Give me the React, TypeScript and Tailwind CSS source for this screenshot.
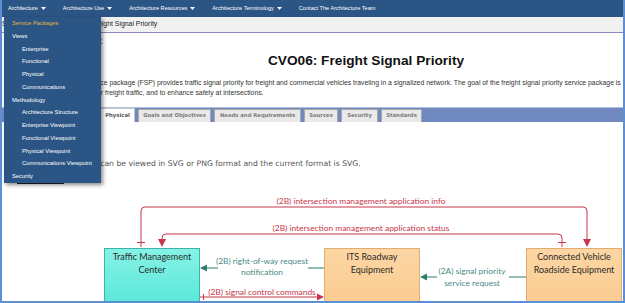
import React from "react";

const navItems = [
    { label: "Architecture", caret: true },
    { label: "Architecture Use", caret: true },
    { label: "Architecture Resources", caret: true },
    { label: "Architecture Terminology", caret: true },
    { label: "Contact The Architecture Team", caret: false },
];

const menuItems = [
    { label: "Service Packages", level: 0, active: true },
    { label: "Views", level: 0 },
    { label: "Enterprise", level: 1 },
    { label: "Functional", level: 1 },
    { label: "Physical", level: 1 },
    { label: "Communications", level: 1 },
    { label: "Methodology", level: 0 },
    { label: "Architecture Structure", level: 1 },
    { label: "Enterprise Viewpoint", level: 1 },
    { label: "Functional Viewpoint", level: 1 },
    { label: "Physical Viewpoint", level: 1 },
    { label: "Communications Viewpoint", level: 1 },
    { label: "Security", level: 0 },
];

const tabs = [
    { label: "Physical", w: "w-[35px]", active: true },
    { label: "Goals and Objectives", w: "w-[73px]" },
    { label: "Needs and Requirements", w: "w-[87px]" },
    { label: "Sources", w: "w-[34px]" },
    { label: "Security", w: "w-[37px]" },
    { label: "Standards", w: "w-[41px]" },
];

function Caret() {
    return (
        <svg width="5" height="3" viewBox="0 0 5 3" className="ml-[3px]">
            <path d="M0 0H5L2.5 3Z" fill="white" />
        </svg>
    );
}

const RED = "#c7364b";
const TEAL = "#2f7d6d";
const FONT = "Lato, 'Open Sans', sans-serif";

function Diagram() {
    return (
        <svg width={621} height={108} viewBox="2 195 621 108" className="block mt-[9px]">
            <defs>
                <linearGradient id="tmc" x1="0" y1="0" x2="0" y2="1">
                    <stop offset="0" stopColor="#86f2e6" />
                    <stop offset="1" stopColor="#4ee6d6" />
                </linearGradient>
                <linearGradient id="rse" x1="0" y1="0" x2="0" y2="1">
                    <stop offset="0" stopColor="#fdd6a4" />
                    <stop offset="1" stopColor="#f9c98c" />
                </linearGradient>
            </defs>

            {/* flow 1: info, TMC -> CV roadside */}
            <path d="M141 248V212Q141 208 145 208H583Q587 208 587 212V241" fill="none" stroke={RED} strokeWidth="1" />
            <path d="M583 240H591L587 248Z" fill={RED} />
            <path d="M137 243.5H145" stroke={RED} strokeWidth="1" />
            <text x="361" y="205" textAnchor="middle" fontFamily={FONT} fontSize="8.4" fill={RED}>
                (2B) intersection management application info
            </text>

            {/* flow 2: status, CV roadside -> TMC */}
            <path d="M562 248V239Q562 235 558 235H166Q162 235 162 239V241" fill="none" stroke={RED} strokeWidth="1" />
            <path d="M158 240H166L162 248Z" fill={RED} />
            <path d="M558 243.5H566" stroke={RED} strokeWidth="1" />
            <text x="361" y="232" textAnchor="middle" fontFamily={FONT} fontSize="8.4" fill={RED}>
                (2B) intersection management application status
            </text>

            {/* boxes */}
            <rect x="104.5" y="249.5" width="95" height="70" fill="url(#tmc)" stroke="#3fb3a6" />
            <rect x="324.5" y="249.5" width="95" height="70" fill="url(#rse)" stroke="#e2ad70" />
            <rect x="526.5" y="249.5" width="95" height="70" fill="url(#rse)" stroke="#e2ad70" />
            <g fontFamily={FONT} fontSize="9" fill="#2a2a2a" textAnchor="middle">
                <text x="152" y="260.5">Traffic Management</text>
                <text x="152" y="273.5">Center</text>
                <text x="372" y="260.5">ITS Roadway</text>
                <text x="372" y="273.5">Equipment</text>
                <text x="574" y="260.5">Connected Vehicle</text>
                <text x="574" y="273.5">Roadside Equipment</text>
            </g>

            {/* ITS -> TMC */}
            <path d="M324 269H206" stroke={TEAL} strokeWidth="1" />
            <path d="M200 269L207 265.5V272.5Z" fill={TEAL} />
            <rect x="218" y="256" width="90" height="21" fill="white" />
            <g fontFamily={FONT} fontSize="8.4" fill="#4a8a86" textAnchor="middle">
                <text x="262" y="265">(2B) right-of-way request</text>
                <text x="262" y="276">notification</text>
            </g>

            {/* CV roadside -> ITS */}
            <path d="M526 278H426" stroke={TEAL} strokeWidth="1" />
            <path d="M420 278L427 274.5V281.5Z" fill={TEAL} />
            <rect x="437" y="265" width="72" height="23" fill="white" />
            <g fontFamily={FONT} fontSize="8.4" fill="#4a8a86" textAnchor="middle">
                <text x="472" y="275">(2A) signal priority</text>
                <text x="472" y="287">service request</text>
            </g>

            {/* TMC -> ITS */}
            <path d="M200 298H318" stroke={RED} strokeWidth="1" />
            <path d="M203.5 295V301" stroke={RED} strokeWidth="1" />
            <path d="M324 298L317 294.5V301.5Z" fill={RED} />
            <text x="262" y="296" textAnchor="middle" fontFamily={FONT} fontSize="8.4" fill={RED}>
                (2B) signal control commands
            </text>
        </svg>
    );
}

export default function App() {
    return (
        <div className="relative w-[625px] h-[303px] overflow-hidden bg-white border-x-2 border-b-2 border-[#5c90d4] font-['Liberation_Sans',Arial,sans-serif]">
            <nav className="h-[17px] bg-[#2b5584] flex items-center gap-[17px] pl-[6px] text-white text-[5.6px] whitespace-nowrap">
                {navItems.map(item => (
                    <span key={item.label} className="flex items-center">
                        {item.label}
                        {item.caret && <Caret />}
                    </span>
                ))}
            </nav>

            <div className="h-[16px] bg-[#f1f1f1] border-b border-[#8e86c2] flex items-center text-[6.9px] text-[#222] whitespace-nowrap">
                Service Packages &gt; CVO06: Freight Signal Priority
            </div>

            <div className="h-[14px] flex items-center pl-[80px] text-[7px]">
                <a className="text-[#4a6fb0] underline">Next &gt;</a>
            </div>

            <h1 className="h-[28px] flex items-center justify-center pl-[107px] text-[13.7px] font-bold text-[#111]">
                CVO06: Freight Signal Priority
            </h1>

            <div className="mt-[3px] text-[6.85px] leading-[10px] text-[#333] whitespace-nowrap">
                <div className="ml-[69px]">
                    This service package (FSP) provides traffic signal priority for freight and commercial vehicles traveling in a signalized network. The goal of the freight signal priority service package is
                </div>
                <div className="ml-[41px]">to reduce delays for freight traffic, and to enhance safety at intersections.</div>
            </div>

            <div className="mt-[9px] h-[15px] bg-[#7089bf] border-t border-[#b3c0dc] flex items-end gap-[3px] pl-[98px]">
                {tabs.map(tab => (
                    <div
                        key={tab.label}
                        className={`${tab.w} flex items-center justify-center border border-b-0 font-['DejaVu_Sans',sans-serif] font-bold text-[5.3px] whitespace-nowrap ${
                            tab.active
                                ? "h-[14px] bg-white border-[#c8c8c8] text-[#555]"
                                : "h-[13px] bg-[#e9e9e9] border-[#a7a7a7] text-[#7b7b7b]"
                        }`}
                    >
                        {tab.label}
                    </div>
                ))}
            </div>

            <div className="mt-[37px] ml-[47px] leading-[10px] text-[7.7px] text-[#555] font-['DejaVu_Sans',sans-serif] whitespace-nowrap">
                The diagram can be viewed in SVG or PNG format and the current format is SVG.
            </div>
            <div className="mt-[6px] ml-[15px] leading-[10px] text-[7px] font-['DejaVu_Sans',sans-serif]">
                <a className="text-[#223] underline">SVG Diagram</a>
            </div>

            <Diagram />

            {/* open dropdown of the Architecture menu */}
            <div className="absolute left-[2px] top-[17px] w-[97px] bg-[#2b5584] shadow-[2px_2px_4px_rgba(0,0,0,0.45)] text-[5.8px] whitespace-nowrap">
                {menuItems.map(item => (
                    <div
                        key={item.label}
                        className={`h-[12.75px] flex items-center ${item.level ? "pl-[18px]" : "pl-[8px]"} ${
                            item.active ? "text-[#e4b443]" : "text-white"
                        }`}
                    >
                        {item.label}
                    </div>
                ))}
            </div>
        </div>
    );
}
